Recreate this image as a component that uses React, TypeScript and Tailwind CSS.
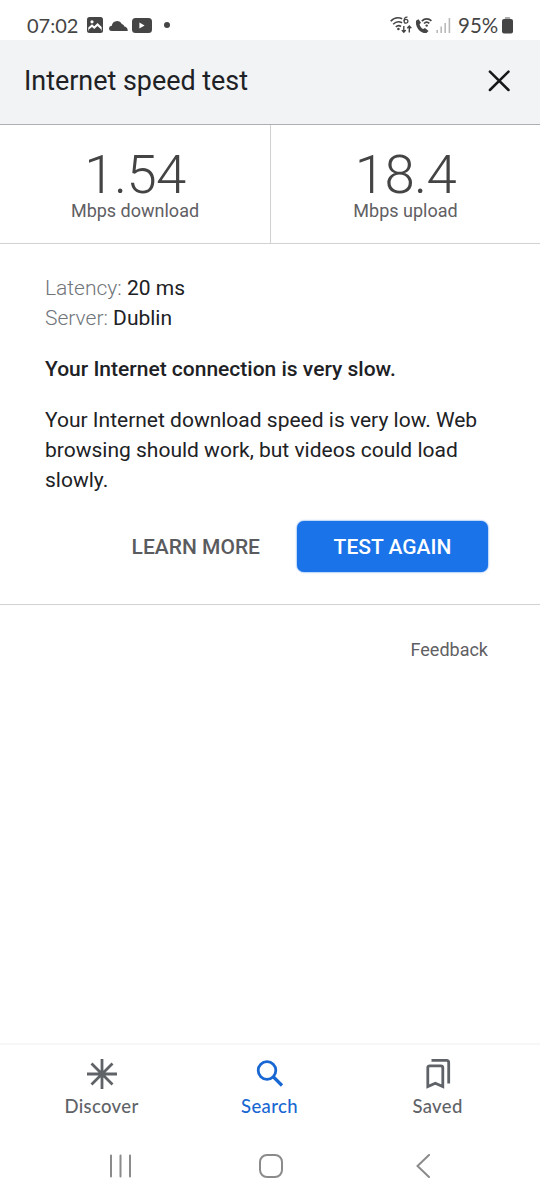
import type { ReactNode } from "react";

interface Metric {
  value: string;
  label: string;
}

const metrics: Metric[] = [
  { value: "1.54", label: "Mbps download" },
  { value: "18.4", label: "Mbps upload" },
];

function StatusBar() {
  return (
    <div className="flex h-10 shrink-0 items-center justify-between pt-[10px] pr-[27px] pl-[27px] font-['Lato',sans-serif] text-[#454545]">
      <div className="flex items-center">
        <span className="w-[60px] text-[20px] leading-[30px] whitespace-nowrap">07:02</span>
        <svg className="h-4 w-4" viewBox="0 0 16 16">
          <rect width="16" height="16" rx="2.5" fill="#454545" />
          <circle cx="5" cy="4.8" r="1.6" fill="#fff" />
          <path d="M1.3 12.3V10.5L5 7.2l2.3 2 3.2-3.2 4.2 4v3.5H1.3z" fill="#fff" />
          <path d="M1.8 14V12.5L5 10l2.3 2 3.2-3 3.7 3.5V14z" fill="#454545" />
        </svg>
        <svg className="ml-[6px] h-[11px] w-[19px]" viewBox="0 0 18 11" preserveAspectRatio="none" fill="#454545">
          <path d="M2.5 11A2.6 2.6 0 0 1 2.7 5.8 5 5 0 0 1 12.2 3.9 3.2 3.2 0 0 1 14.6 6.5Q18 7.5 17.7 11z" />
        </svg>
        <svg className="ml-[4px] h-[15px] w-5" viewBox="0 0 20 15">
          <rect width="20" height="15" rx="3.5" fill="#454545" />
          <path d="M7.4 4.5v6l5.2-3z" fill="#fff" />
        </svg>
        <span className="ml-3 h-1.5 w-1.5 rounded-full bg-[#454545]" />
      </div>
      <div className="flex items-center">
        <svg className="h-[18px] w-[22px]" viewBox="0 0 22 18" fill="none" stroke="#454545" strokeWidth="1.6">
          <path d="M.7 5.2C3.8 1.9 8.5 1.2 12.2 2.7M3.2 8.2c2.4-2.5 6-3 8.9-1.4M5.8 11c1.6-1.5 3.6-1.6 5.2-.5" />
          <circle cx="8.4" cy="13" r="1.3" fill="#454545" stroke="none" />
          <path d="M17.5 1.2C15.2.8 14.1 2.2 14.1 5" strokeWidth="1.3" />
          <circle cx="16" cy="5.3" r="1.9" strokeWidth="1.3" />
          <path d="M13.8 10v6.3m-2-2.2 2 2.2 2-2.2M19.3 16.5V10m-2 2.3 2-2.3 2 2.3" strokeWidth="1.4" />
        </svg>
        <svg className="ml-[3px] h-[17px] w-[17px]" viewBox="0 0 17 17">
          <path d="M3.5 2.2 1.2 3.5C-.3 9.7 5.1 16.5 11.5 16l2-2.1-3.5-3-1.9 1.2C6.2 11.1 4.9 9.2 4.6 7.2L6 5.7z" fill="#454545" />
          <path d="M6.8 4.1c3-3 7-2.8 9.6-.2M9 6.5c1.7-1.6 3.9-1.5 5.3-.1" fill="none" stroke="#454545" strokeWidth="1.7" />
          <circle cx="11.7" cy="8.6" r="1.2" fill="#454545" />
        </svg>
        <svg className="ml-[4px] h-[15px] w-[15px]" viewBox="0 0 15 15" stroke="#b9b9b9" strokeWidth="1.6">
          <path d="M1.2 12v3M5.2 8.5V15M9.2 5v10M13.4 0v15" />
        </svg>
        <span className="ml-[7px] w-[44px] text-[20.5px] leading-[30px] whitespace-nowrap">95%</span>
        <svg className="h-[17px] w-[11px]" viewBox="0 0 11 17">
          <rect x="2.8" width="5.4" height="3" rx="1" fill="#aaa" />
          <rect y="2" width="11" height="14.5" rx="2" fill="#454545" />
        </svg>
      </div>
    </div>
  );
}

function Header() {
  return (
    <header className="flex h-[85px] shrink-0 items-center justify-between border-b border-[#adaeb1] bg-[#f1f3f4] pr-[30px] pb-[2px] pl-6">
      <h1 className="text-[26.9px] leading-8 text-[#202124]">Internet speed test</h1>
      <svg className="h-[22px] w-[22px]" viewBox="0 0 22 22" stroke="#17181a" strokeWidth="2.5" strokeLinecap="round">
        <path d="M1.9 1.7 20.5 20M20.5 1.7 1.9 20" />
      </svg>
    </header>
  );
}

function MetricCell({ value, label }: Metric) {
  return (
    <div className="flex flex-col items-center pt-[25px]">
      <div className="text-[54.5px] leading-[48px] font-light tracking-[-0.6px] text-[#444]">{value}</div>
      <div className="text-[18px] leading-[26px] text-[#5f6063]">{label}</div>
    </div>
  );
}

interface NavItemProps {
  label: string;
  active?: boolean;
  children: ReactNode;
}

function NavItem({ label, active, children }: NavItemProps) {
  return (
    <div
      className={`flex w-[168px] flex-col items-center ${active ? "text-[#1967d2]" : "text-[#5f6368]"}`}
    >
      <svg className="h-8 w-8" viewBox="0 0 32 32" fill="none" stroke="currentColor">
        {children}
      </svg>
      <span className="mt-1 font-['Lato',sans-serif] text-[18.5px] leading-6 font-medium tracking-[0.35px]">{label}</span>
    </div>
  );
}

function BottomNav() {
  return (
    <nav className="flex h-[84px] shrink-0 justify-center border-t-2 border-[#f7f7f7] pt-[13px] pr-px">
      <NavItem label="Discover">
        <path d="M16 1v30M1 16h30M5.5 5.5l21 21M26.5 5.5l-21 21" strokeWidth="2.8" />
      </NavItem>
      <NavItem label="Search" active>
        <circle cx="13" cy="12.5" r="8.8" strokeWidth="2.8" />
        <path d="m19 18.5 9 9" strokeWidth="3.2" />
      </NavItem>
      <NavItem label="Saved">
        <path d="M5.8 28.5V9.8q0-2 2-2h11q2 0 2 2v18.7l-7.5-3.3z" strokeWidth="2.8" />
        <path d="M9.5 2.4h15q2.2 0 2.2 2.2v21" strokeWidth="2.8" />
      </NavItem>
    </nav>
  );
}

function SystemNav() {
  return (
    <div className="flex h-[73px] shrink-0 items-center pt-[5px] pl-[109px] text-[#8b8b8b]">
      <svg className="h-6 w-[23px]" viewBox="0 0 23 24" stroke="currentColor" strokeWidth="2" strokeLinecap="round">
        <path d="M2 1.5v21M11.5 1.5v21M21 1.5v21" />
      </svg>
      <span className="ml-[127px] h-6 w-6 rounded-[8px] border-2 border-current" />
      <svg className="ml-[133px] h-6 w-[14px]" viewBox="0 0 14 24" fill="none" stroke="currentColor" strokeWidth="2" strokeLinecap="round">
        <path d="M13 1 1.5 12 13 23" />
      </svg>
    </div>
  );
}

export default function App() {
  return (
    <div className="flex h-[1200px] w-[540px] flex-col overflow-hidden bg-white font-['Roboto',sans-serif] text-[#202124]">
      <StatusBar />
      <Header />
      <section className="grid h-[118px] shrink-0 grid-cols-[271px_269px] divide-x divide-[#d0d0d0]">
        {metrics.map((metric) => (
          <MetricCell key={metric.label} {...metric} />
        ))}
      </section>
      <main className="h-[362px] shrink-0 border-y border-[#d0d3d2] px-[45px] pt-[29px] text-[21px] leading-[30px]">
        <div>
          <span className="font-light text-[#70757a]">Latency:</span> 20 ms
        </div>
        <div>
          <span className="font-light text-[#70757a]">Server:</span> Dublin
        </div>
        <p className="mt-[21px] font-medium">Your Internet connection is very slow.</p>
        <p className="mt-[21px] whitespace-nowrap">
          Your Internet download speed is very low. Web
          <br />
          browsing should work, but videos could load
          <br />
          slowly.
        </p>
        <div className="mt-[26px] mr-[7px] flex items-center justify-end font-medium">
          <button className="mr-[37px] text-[#5a5b5e]">LEARN MORE</button>
          <button className="h-[51px] w-[191px] rounded-[7px] bg-[#1a73e8] text-white shadow-[0_0_2px_#1a73e8]">
            TEST AGAIN
          </button>
        </div>
      </main>
      <footer className="flex flex-1 justify-end pt-[33px] pr-[52px] text-[18px] leading-6 text-[#5f6063]">
        Feedback
      </footer>
      <BottomNav />
      <SystemNav />
    </div>
  );
}
